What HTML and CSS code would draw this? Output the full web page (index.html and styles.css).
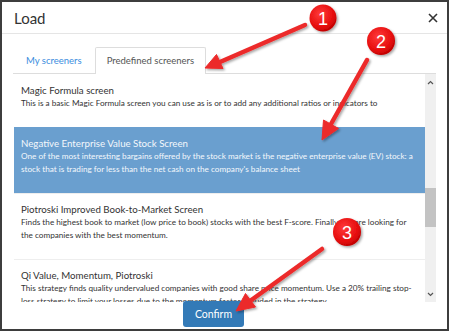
FILE: index.html
```html
<!DOCTYPE html>
<html lang="en">
<head>
    <meta charset="UTF-8">
    <title>Load</title>
    <link rel="stylesheet" href="styles.css">
</head>
<body>
    <div class="modal">
        <div class="modal-header">
            <h4>Load</h4>
            <button class="close" title="Close">
                <svg width="10" height="10" viewBox="0 0 10 10"><path d="M1 1L9 9M9 1L1 9" stroke="#333" stroke-width="1.6"/></svg>
            </button>
        </div>

        <div class="modal-body">
            <ul class="tabs">
                <li class="tab">My screeners</li>
                <li class="tab active">Predefined screeners</li>
            </ul>

            <div class="list-wrap">
                <div class="list">
                    <div class="item first">
                        <div class="item-title">Magic Formula screen</div>
                        <div class="item-desc">This is a basic Magic Formula screen you can use as is or to add any additional ratios or indicators to</div>
                    </div>
                    <div class="item selected">
                        <div class="item-title">Negative Enterprise Value Stock Screen</div>
                        <div class="item-desc">One of the most interesting bargains offered by the stock market is the negative enterprise value (EV) stock: a<br>stock that is trading for less than the net cash on the company's balance sheet</div>
                    </div>
                    <div class="item">
                        <div class="item-title">Piotroski Improved Book-to-Market Screen</div>
                        <div class="item-desc">Finds the highest book to market (low price to book) stocks with the best F-score. Finally, we are looking for<br>the companies with the best momentum.</div>
                    </div>
                    <div class="item">
                        <div class="item-title">Qi Value, Momentum, Piotroski</div>
                        <div class="item-desc">This strategy finds quality undervalued companies with good share price momentum. Use a 20% trailing stop-<br>loss strategy to limit your losses due to the momentum factor included in the strategy.</div>
                    </div>
                </div>

                <!-- scrollbar -->
                <div class="scrollbar">
                    <span class="sb-btn">
                        <svg width="7" height="5" viewBox="0 0 7 5"><path d="M1 4L3.5 1.5L6 4" fill="none" stroke="#555" stroke-width="1.2"/></svg>
                    </span>
                    <div class="sb-track">
                        <div class="sb-thumb" style="margin-top: 98px;"></div>
                    </div>
                    <span class="sb-btn">
                        <svg width="7" height="5" viewBox="0 0 7 5"><path d="M1 1L3.5 3.5L6 1" fill="none" stroke="#555" stroke-width="1.2"/></svg>
                    </span>
                </div>
            </div>
        </div>

        <div class="modal-footer">
            <button class="btn btn-primary">Confirm</button>
        </div>

        <!-- annotation arrows and numbered badges -->
        <svg class="annotations" width="450" height="332" viewBox="0 0 450 332">
            <defs>
                <radialGradient id="badge" cx="0.4" cy="0.35" r="0.7">
                    <stop offset="0" stop-color="#ff3b3b"/>
                    <stop offset="0.7" stop-color="#e60d0d"/>
                    <stop offset="1" stop-color="#b80000"/>
                </radialGradient>
                <filter id="shadow" x="-20%" y="-20%" width="140%" height="140%">
                    <feDropShadow dx="1.5" dy="1.5" stdDeviation="1.2" flood-color="#000" flood-opacity="0.35"/>
                </filter>
            </defs>

            <g filter="url(#shadow)">
                <line x1="305" y1="25" x2="220" y2="62" class="arrow-line"/>
                <polygon points="205,68 223,68.5 216.5,54.5" class="arrow-head"/>

                <line x1="367" y1="60" x2="331" y2="124" class="arrow-line"/>
                <polygon points="322,140 338.5,128.5 323.5,120" class="arrow-head"/>

                <line x1="322" y1="249" x2="250" y2="301" class="arrow-line"/>
                <polygon points="236,311 255.5,307 245.5,293.5" class="arrow-head"/>

                <circle cx="323" cy="18" r="13.5" fill="url(#badge)"/>
                <circle cx="381" cy="41" r="14" fill="url(#badge)"/>
                <circle cx="347" cy="232" r="14" fill="url(#badge)"/>
            </g>
            <text x="323" y="24.5" class="badge-num">1</text>
            <text x="381" y="47.5" class="badge-num">2</text>
            <text x="347" y="238.5" class="badge-num">3</text>
        </svg>
    </div>
</body>
</html>
```

FILE: styles.css
```css
* {
    margin: 0;
    padding: 0;
    box-sizing: border-box;
}

body {
    font-family: Lato, 'Open Sans', sans-serif;
    background: #fff;
    color: #333;
}

.modal {
    position: relative;
    width: 449px;
    height: 331px;
    border: 2px solid #3d3d3d;
    background: #fff;
    overflow: hidden;
}

.modal-header {
    display: flex;
    align-items: center;
    justify-content: space-between;
    height: 32px;
    padding: 0 9px 0 12px;
    border-bottom: 1px solid #e5e5e5;
}

.modal-header h4 {
    font-size: 15px;
    font-weight: 400;
    color: #333;
}

.close {
    border: none;
    background: none;
    display: flex;
    padding: 0;
}

.modal-body {
    padding: 13px 11px 0 11px;
}

.tabs {
    list-style: none;
    display: flex;
    border-bottom: 1px solid #ddd;
    height: 27px;
}

.tab {
    font-size: 9.5px;
    padding: 0 12px;
    line-height: 25px;
    color: #3a8dde;
    border: 1px solid transparent;
    border-bottom: none;
}

.tab.active {
    padding: 0 11px;
    color: #555;
    background: #fff;
    border-color: #ddd;
    border-radius: 2px 2px 0 0;
    height: 27px;
}

.list-wrap {
    display: flex;
    height: 228px;
}

.list {
    flex: 1;
    overflow: hidden;
    padding-left: 1px;
}

.item {
    padding: 8px 7px 16px 7px;
    border-top: 1px solid #eee;
}

.item.first {
    border-top: none;
    padding-top: 9px;
    padding-bottom: 16px;
}

.item-title {
    font-size: 9.7px;
    line-height: 14px;
    color: #333;
}

.item-desc {
    font-size: 8.2px;
    line-height: 13.5px;
    color: #333;
}

.item.selected {
    background: #6a9fcf;
    border-top-color: #6a9fcf;
}

.item.selected .item-title,
.item.selected .item-desc {
    color: #f4f8fc;
}

.scrollbar {
    width: 11px;
    display: flex;
    flex-direction: column;
    background: #f0f0f0;
}

.sb-btn {
    height: 16px;
    display: flex;
    align-items: center;
    justify-content: center;
}

.sb-track {
    flex: 1;
}

.sb-thumb {
    height: 39px;
    background: #c3c3c3;
}

.modal-footer {
    padding-left: 181px;
    margin-top: -1px;
}

.btn {
    padding: 0;
    border: none;
    border-radius: 3px;
    cursor: pointer;
    font-family: inherit;
}

.btn-primary {
    width: 61px;
    height: 26px;
    font-size: 10.5px;
    background: #337ab7;
    color: #fff;
}

.annotations {
    position: absolute;
    top: -2px;
    left: -2px;
    pointer-events: none;
}

.arrow-line {
    stroke: #ec2a2a;
    stroke-width: 4.5;
    stroke-linecap: round;
}

.arrow-head {
    fill: #ec2a2a;
    stroke: #ec2a2a;
    stroke-width: 1;
    stroke-linejoin: round;
}

.badge-num {
    font-family: 'Liberation Sans', Arial, sans-serif;
    font-size: 18px;
    fill: #fff;
    text-anchor: middle;
}
```
